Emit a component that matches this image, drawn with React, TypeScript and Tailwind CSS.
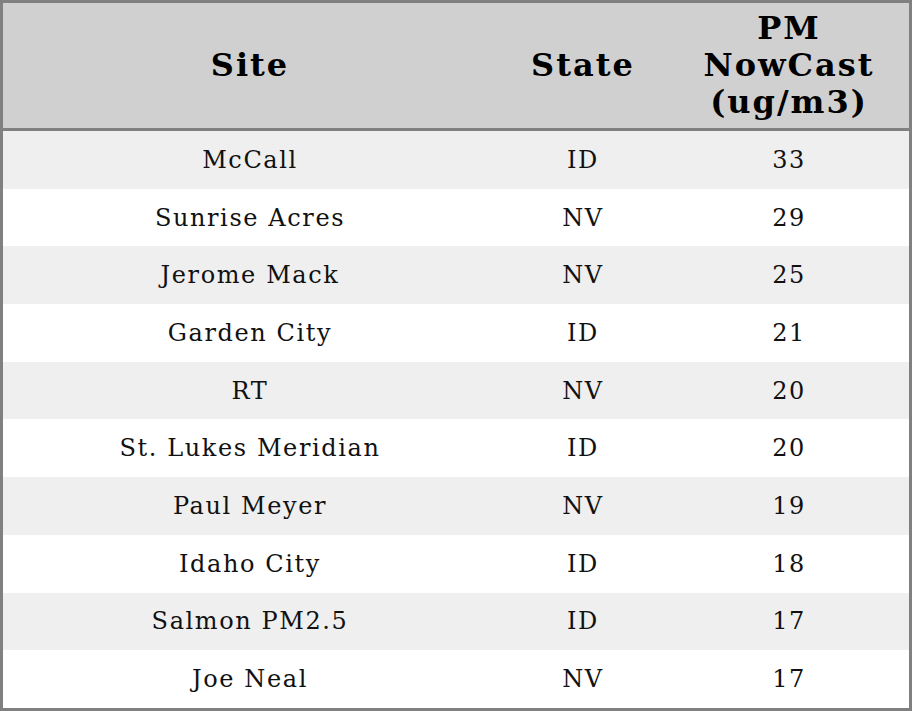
const rows = [
  { site: 'McCall', state: 'ID', pm: 33 },
  { site: 'Sunrise Acres', state: 'NV', pm: 29 },
  { site: 'Jerome Mack', state: 'NV', pm: 25 },
  { site: 'Garden City', state: 'ID', pm: 21 },
  { site: 'RT', state: 'NV', pm: 20 },
  { site: 'St. Lukes Meridian', state: 'ID', pm: 20 },
  { site: 'Paul Meyer', state: 'NV', pm: 19 },
  { site: 'Idaho City', state: 'ID', pm: 18 },
  { site: 'Salmon PM2.5', state: 'ID', pm: 17 },
  { site: 'Joe Neal', state: 'NV', pm: 17 },
];

export default function App() {
  return (
    <div className="w-[912px] h-[711px] bg-white font-['DejaVu_Serif',serif] text-black">
      <div className="w-[912px] h-[711px] border-[3px] border-[#808080]">
        {/* Header */}
        <div className="grid grid-cols-[494px_172px_1fr] h-[128px] bg-[#d0d0d0] border-b-[3px] border-[#808080] text-[32px] font-bold leading-[37px] tracking-[2px]">
          <div className="flex items-center justify-center">Site</div>
          <div className="flex items-center justify-center">State</div>
          <div className="flex items-center justify-center text-center">
            PM
            <br />
            NowCast
            <br />
            (ug/m3)
          </div>
        </div>

        {/* Rows */}
        {rows.map((r, i) => (
          <div
            key={i}
            className={`grid grid-cols-[494px_172px_1fr] h-[57.7px] items-center text-center text-[24px] tracking-[1.6px] text-[#111] ${
              i % 2 === 0 ? 'bg-[#efefef]' : 'bg-white'
            }`}
          >
            <div>{r.site}</div>
            <div>{r.state}</div>
            <div>{r.pm}</div>
          </div>
        ))}
      </div>
    </div>
  );
}
